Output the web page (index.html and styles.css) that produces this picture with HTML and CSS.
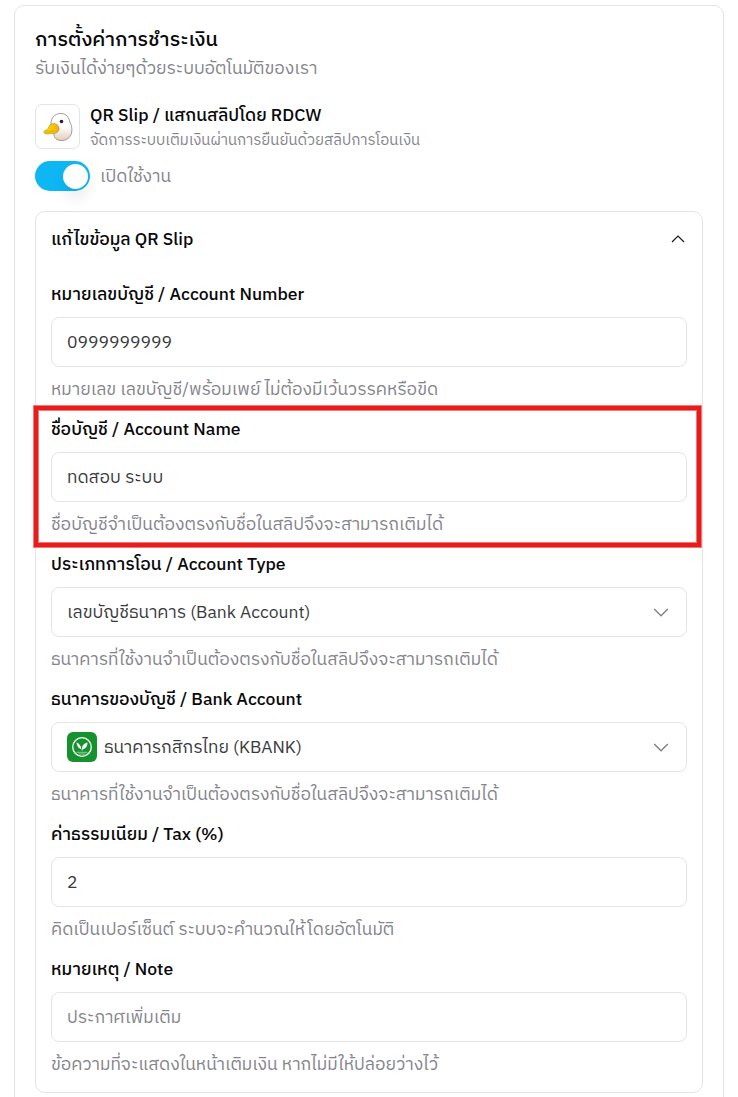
FILE: index.html
```
<!DOCTYPE html>
<html lang="th">

<head>
    <meta charset="UTF-8">
    <meta name="viewport" content="width=device-width, initial-scale=1.0">
    <title>การตั้งค่าการชำระเงิน</title>
    <link rel="stylesheet" href="styles.css">
</head>

<body>
    <div class="card">
        <h2 class="card-title">การตั้งค่าการชำระเงิน</h2>
        <p class="card-subtitle">รับเงินได้ง่ายๆด้วยระบบอัตโนมัติของเรา</p>

        <div class="provider">
            <div class="provider-icon">
                <svg width="30" height="30" viewBox="0 0 30 30">
                    <defs>
                        <linearGradient id="duckBody" x1="0" y1="0" x2="0" y2="1">
                            <stop offset="0.5" stop-color="#ffffff" />
                            <stop offset="1" stop-color="#e3cdb5" />
                        </linearGradient>
                        <linearGradient id="duckBeak" x1="0" y1="0" x2="1" y2="0">
                            <stop offset="0" stop-color="#ffd400" />
                            <stop offset="0.6" stop-color="#f6c600" />
                            <stop offset="1" stop-color="#f4a12c" />
                        </linearGradient>
                    </defs>
                    <path d="M8 12C8 6 11.500 1.500 18 1.500C24 1.500 26 6 27 10.500C28.500 13 29.500 17 28.500 21C27.500 26 23 28.500 18.500 28.500C14 28.500 10.500 26 11 21.500Z" fill="url(#duckBody)" stroke="#8b8580" stroke-width="0.800" />
                    <path d="M8 12C11 10.500 15.500 12 16 16C16.500 20 13 21.500 9.500 21.500C5 22 1.500 22.500 1 20.500C.5 18.500 2.500 18.500 4 17.500C6 16 6 13 8 12Z" fill="url(#duckBeak)" stroke="#8f8030" stroke-width="0.500" />
                    <path d="M2 19.800C5 20.500 8 20 11 18.500" fill="none" stroke="#b39a00" stroke-width="0.600" />
                    <circle cx="18.500" cy="9.500" r="1.800" fill="#222" />
                </svg>
            </div>
            <div class="provider-text">
                <div class="provider-name">QR Slip / แสกนสลิปโดย RDCW</div>
                <div class="provider-desc">จัดการระบบเติมเงินผ่านการยืนยันด้วยสลิปการโอนเงิน</div>
            </div>
        </div>

        <label class="switch-row">
            <input type="checkbox" class="switch" checked>
            <span>เปิดใช้งาน</span>
        </label>

        <div class="panel">
            <div class="panel-header">
                <span>แก้ไขข้อมูล QR Slip</span>
                <svg width="14" height="8" viewBox="0 0 14 8">
                    <path d="M1 7L7 1L13 7" fill="none" stroke="#18181b" stroke-width="1.200" />
                </svg>
            </div>

            <div class="field">
                <div class="field-label">หมายเลขบัญชี / Account Number</div>
                <div class="field-box"><span>0999999999</span></div>
                <div class="field-help">หมายเลข เลขบัญชี/พร้อมเพย์ ไม่ต้องมีเว้นวรรคหรือขีด</div>
            </div>

            <div class="field highlighted">
                <div class="field-label">ชื่อบัญชี / Account Name</div>
                <div class="field-box"><span>ทดสอบ ระบบ</span></div>
                <div class="field-help">ชื่อบัญชีจำเป็นต้องตรงกับชื่อในสลิปจึงจะสามารถเติมได้</div>
            </div>

            <div class="field">
                <div class="field-label">ประเภทการโอน / Account Type</div>
                <div class="field-box">
                    <span>เลขบัญชีธนาคาร (Bank Account)</span>
                    <svg class="arrow" width="16" height="9" viewBox="0 0 16 9">
                        <path d="M1.200 1L8 7.800L14.800 1" fill="none" stroke="#7f7f84" stroke-width="1.300" />
                    </svg>
                </div>
                <div class="field-help">ธนาคารที่ใช้งานจำเป็นต้องตรงกับชื่อในสลิปจึงจะสามารถเติมได้</div>
            </div>

            <div class="field">
                <div class="field-label">ธนาคารของบัญชี / Bank Account</div>
                <div class="field-box">
                    <svg class="bank-logo" width="30" height="30" viewBox="0 0 30 30">
                        <rect width="30" height="30" rx="6" fill="#15922d" />
                        <circle cx="15" cy="15" r="9.300" fill="none" stroke="#fff" stroke-width="1.300" />
                        <path d="M14.500 19.500C14.500 14.500 13 12 9.500 10.500C10 14.500 11.500 16 14.500 17.500Z" fill="#fff" />
                        <path d="M15 19.500C14.500 14.500 16 11.500 20.500 10.500C20.500 14 19 16.500 15.500 17.500Z" fill="#fff" />
                        <path d="M9.500 20.300H20.500M11.500 22H18.500" stroke="#9bd0a5" stroke-width="0.900" />
                    </svg>
                    <span>ธนาคารกสิกรไทย (KBANK)</span>
                    <svg class="arrow" width="16" height="9" viewBox="0 0 16 9">
                        <path d="M1.200 1L8 7.800L14.800 1" fill="none" stroke="#7f7f84" stroke-width="1.300" />
                    </svg>
                </div>
                <div class="field-help">ธนาคารที่ใช้งานจำเป็นต้องตรงกับชื่อในสลิปจึงจะสามารถเติมได้</div>
            </div>

            <div class="field">
                <div class="field-label">ค่าธรรมเนียม / Tax (%)</div>
                <div class="field-box"><span>2</span></div>
                <div class="field-help">คิดเป็นเปอร์เซ็นต์ ระบบจะคำนวณให้โดยอัตโนมัติ</div>
            </div>

            <div class="field">
                <div class="field-label">หมายเหตุ / Note</div>
                <div class="field-box placeholder"><span>ประกาศเพิ่มเติม</span></div>
                <div class="field-help">ข้อความที่จะแสดงในหน้าเติมเงิน หากไม่มีให้ปล่อยว่างไว้</div>
            </div>
        </div>
    </div>
</body>

</html>
```
FILE: styles.css
```
* {
    box-sizing: border-box;
}

body {
    margin: 0;
    padding: 5px 14px 0;
    height: 1097px;
    overflow: hidden;
    background: #fff;
    color: #09090b;
    font-family: "IBM Plex Sans Thai", Roboto, "Noto Sans Thai", sans-serif;
    font-size: 17.5px;
    line-height: 26px;
    white-space: nowrap;
}

.card {
    width: 710px;
    height: 1110px;
    padding: 20px;
    border: 1px solid #e4e4e7;
    border-radius: 10px;
}

.card-title {
    height: 28px;
    margin: 0;
    font-size: 20px;
    font-weight: 500;
    line-height: 30px;
}

.card-subtitle {
    height: 24px;
    margin: 2px 0 0;
    color: #84848b;
}

.provider {
    display: flex;
    gap: 10px;
    height: 45px;
    margin-top: 24px;
}

.provider-icon {
    display: flex;
    align-items: center;
    justify-content: center;
    width: 45px;
    height: 45px;
    border: 1px solid #e4e4e7;
    border-radius: 7px;
}

.provider-name {
    font-weight: 500;
    line-height: 23px;
}

.provider-desc {
    margin-top: 2px;
    color: #84848b;
    font-size: 15px;
    line-height: 24px;
}

.switch-row {
    display: flex;
    align-items: center;
    gap: 10px;
    margin-top: 12px;
    color: #84848b;
}

.switch-row span {
    padding-top: 1px;
}

.switch {
    appearance: none;
    width: 55px;
    height: 30px;
    margin: 0;
    padding: 2.5px;
    border-radius: 15px;
    background: #0eb7f4;
}

.switch::before {
    content: "";
    display: block;
    width: 25px;
    height: 25px;
    margin-left: auto;
    border-radius: 50%;
    background: #fff;
    box-shadow: 0 10px 15px rgba(0, 0, 0, 0.08);
}

.panel {
    width: 668px;
    height: 882px;
    margin-top: 20px;
    padding: 15px;
    border: 1px solid #e4e4e7;
    border-radius: 10px;
}

.panel-header {
    display: flex;
    align-items: center;
    justify-content: space-between;
    height: 24px;
    margin-bottom: 31px;
    padding-right: 2px;
    font-weight: 500;
}

.panel-header span {
    padding-top: 2px;
}

.field {
    position: relative;
    margin-bottom: 16px;
}

.field-label {
    height: 24px;
    margin-bottom: 11px;
    font-weight: 500;
}

.field-box {
    display: flex;
    align-items: center;
    height: 50px;
    padding: 0 17px 0 15px;
    border: 1px solid #e4e4e7;
    border-radius: 8px;
    color: #3a3a3d;
}

.field-box span {
    padding-top: 1px;
}

.placeholder {
    color: #84848b;
}

.field-help {
    height: 24px;
    margin-top: 10px;
    color: #84848b;
}

.arrow {
    margin-left: auto;
}

.bank-logo {
    margin-right: 7px;
}

/* red frame around the account name field */
.highlighted::after {
    content: "";
    position: absolute;
    top: -11px;
    right: -14px;
    bottom: -11px;
    left: -17px;
    border: 4px solid #e91c1c;
    box-shadow: 0 0 0 1px rgba(233, 28, 28, 0.6), inset 0 0 0 1px rgba(233, 28, 28, 0.6);
}
```
